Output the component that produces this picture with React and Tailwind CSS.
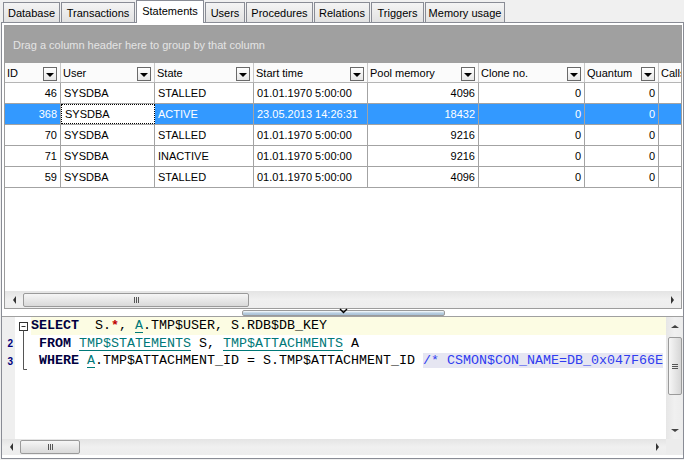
// Session monitor - Statements tab with grid and SQL preview
const tabs = [
  { label: 'Database', w: 'w-[57px]' },
  { label: 'Transactions', w: 'w-[74px]' },
  { label: 'Statements', w: 'w-[68px]', active: true },
  { label: 'Users', w: 'w-[40px]' },
  { label: 'Procedures', w: 'w-[67px]' },
  { label: 'Relations', w: 'w-[56px]' },
  { label: 'Triggers', w: 'w-[53px]' },
  { label: 'Memory usage', w: 'w-[80px]' },
];

const columns = [
  { key: 'id', label: 'ID', w: 'w-[56px]', right: true },
  { key: 'user', label: 'User', w: 'w-[94px]' },
  { key: 'state', label: 'State', w: 'w-[99px]' },
  { key: 'start', label: 'Start time', w: 'w-[114px]' },
  { key: 'pool', label: 'Pool memory', w: 'w-[111px]', right: true },
  { key: 'clone', label: 'Clone no.', w: 'w-[106px]', right: true },
  { key: 'quantum', label: 'Quantum', w: 'w-[74px]', right: true },
  { key: 'calls', label: 'Calls', w: 'w-[60px]', right: true },
];

const rows = [
  { id: 46, user: 'SYSDBA', state: 'STALLED', start: '01.01.1970 5:00:00', pool: 4096, clone: 0, quantum: 0, calls: '' },
  { id: 368, user: 'SYSDBA', state: 'ACTIVE', start: '23.05.2013 14:26:31', pool: 18432, clone: 0, quantum: 0, calls: '', selected: true },
  { id: 70, user: 'SYSDBA', state: 'STALLED', start: '01.01.1970 5:00:00', pool: 9216, clone: 0, quantum: 0, calls: '' },
  { id: 71, user: 'SYSDBA', state: 'INACTIVE', start: '01.01.1970 5:00:00', pool: 9216, clone: 0, quantum: 0, calls: '' },
  { id: 59, user: 'SYSDBA', state: 'STALLED', start: '01.01.1970 5:00:00', pool: 4096, clone: 0, quantum: 0, calls: '' },
];

function DropButton() {
  return (
    <div className="w-[14px] h-[14px] shrink-0 border border-[#6a6a6a] bg-gradient-to-b from-[#ffffff] to-[#e6e6e6] flex items-center justify-center">
      <div className="mt-[2px] border-x-[4px] border-x-transparent border-t-[4px] border-t-black" />
    </div>
  );
}

function Thumb({ className }) {
  return (
    <div className={`rounded-[2px] border border-[#9a9a9a] bg-gradient-to-b from-[#f6f6f6] to-[#d9d9d9] flex items-center justify-center ${className}`}>
      <div className="flex gap-[1px]">
        <div className="w-[1px] h-[6px] bg-[#555]" />
        <div className="w-[1px] h-[6px] bg-[#555]" />
        <div className="w-[1px] h-[6px] bg-[#555]" />
      </div>
    </div>
  );
}

function HScroll({ thumb, className = '' }) {
  return (
    <div className={`flex items-center bg-gradient-to-b from-[#e4e4e4] via-[#f0f0f0] to-[#ededed] ${className}`}>
      <div className="w-[18px] h-full flex items-center justify-center">
        <div className="border-y-[4px] border-y-transparent border-r-[3px] border-r-[#333]" />
      </div>
      <Thumb className={`${thumb} h-[14px]`} />
      <div className="flex-1" />
      <div className="w-[18px] h-full flex items-center justify-center">
        <div className="border-y-[4px] border-y-transparent border-l-[3px] border-l-[#333]" />
      </div>
    </div>
  );
}

function Grid() {
  return (
    <div className="ml-[2px] w-[678px] h-[284px] border border-[#9c9c9c] flex flex-col overflow-hidden">
      {/* Group by panel */}
      <div className="h-[37px] shrink-0 bg-[#a0a0a0] flex items-center pl-[8px] pt-[2px] text-[#e4e4e4]">
        Drag a column header here to group by that column
      </div>

      {/* Header */}
      <div className="h-[20px] shrink-0 flex bg-[#fbfbfb] border-b border-[#b5b5b5]">
        {columns.map((c) => (
          <div key={c.key} className={`${c.w} shrink-0 h-full flex items-center justify-between pl-[2px] pr-[3px] pt-[2px] border-r border-[#c8c8c8]`}>
            <span className="whitespace-nowrap">{c.label}</span>
            {c.key !== 'calls' && <DropButton />}
          </div>
        ))}
      </div>

      {/* Rows */}
      <div className="flex-1 bg-white">
        {rows.map((r) => (
          <div key={r.id} className={`h-[21px] flex border-b border-[#a3a3a3] ${r.selected ? 'bg-[#3399ff] text-white' : 'text-black'}`}>
            {columns.map((c) => {
              const focus = r.selected && c.key === 'user';
              return (
                <div
                  key={c.key}
                  className={`${c.w} shrink-0 h-full flex items-center px-[3px] pt-[1px] whitespace-nowrap ${c.right ? 'justify-end' : ''} ${
                    focus ? 'bg-white text-black border border-dotted border-black' : 'border-r border-[#a3a3a3]'
                  }`}
                >
                  {r[c.key]}
                </div>
              );
            })}
          </div>
        ))}
      </div>

      <HScroll thumb="w-[226px]" className="h-[17px] shrink-0" />
    </div>
  );
}

function Splitter() {
  return (
    <div className="h-[7px] shrink-0 flex justify-center items-center bg-white">
      <div className="ml-[2px] w-[203px] h-[6px] rounded-[2px] border border-[#9a9a9a] bg-gradient-to-b from-[#ffffff] via-[#b9cfe0] to-[#a8c0d6] relative flex justify-center">
        <svg className="absolute -top-[3px]" width="9" height="6" viewBox="0 0 9 6">
          <path d="M1 1 L4.5 4.5 L8 1" fill="none" stroke="#000" strokeWidth="1.4" />
        </svg>
      </div>
    </div>
  );
}

const kw = 'font-bold text-[#000040]';
const tbl = 'text-[#007878] underline decoration-[#007878] underline-offset-[3px]';

function Editor() {
  return (
    <div className="h-[139px] shrink-0 border-t border-[#a0a0a0] flex flex-col">
      <div className="h-[122px] flex">
        {/* gutter */}
        <div className="w-[13px] bg-[#efefef] flex flex-col items-end pr-[2px] text-[10px] font-bold text-[#00007a]">
          <div className="h-[17.7px]" />
          <div className="h-[17.7px] flex items-center">2</div>
          <div className="h-[17.7px] flex items-center">3</div>
        </div>
        {/* fold column */}
        <div className="w-[16px] bg-white">
          <svg width="16" height="60" viewBox="0 0 16 60">
            <rect x="4.5" y="5.5" width="8" height="8" fill="white" stroke="#333" />
            <line x1="6.5" y1="9.5" x2="10.5" y2="9.5" stroke="#333" />
            <line x1="8.5" y1="13.5" x2="8.5" y2="52.5" stroke="#555" />
            <line x1="8.5" y1="52.5" x2="12" y2="52.5" stroke="#555" />
          </svg>
        </div>
        {/* code */}
        <div className="flex-1 bg-white overflow-hidden font-['Liberation_Mono','Courier_New',monospace] text-[13.33px] text-black whitespace-pre">
          <div className="h-[17.7px] leading-[17.7px] bg-[#fcfce3]">
            <span className={kw}>SELECT</span>{'  S.'}<span className="font-bold text-[#c00000]">*</span>{', '}
            <span className={tbl}>A</span>{'.TMP$USER, S.RDB$DB_KEY'}
          </div>
          <div className="h-[17.7px] leading-[17.7px]">
            {' '}<span className={kw}>FROM</span>{' '}<span className={tbl}>TMP$STATEMENTS</span>{' S, '}
            <span className={tbl}>TMP$ATTACHMENTS</span>{' A'}
          </div>
          <div className="h-[17.7px] leading-[17.7px]">
            {' '}<span className={kw}>WHERE</span>{' '}<span className={tbl}>A</span>{'.TMP$ATTACHMENT_ID = S.TMP$ATTACHMENT_ID '}
            <span className="bg-[#e6e6f2] text-[#2f3cf0]">/* CSMON$CON_NAME=DB_0x047F66E</span>
          </div>
        </div>
        {/* vertical scrollbar */}
        <div className="w-[17px] bg-gradient-to-r from-[#e6e6e6] via-[#f0f0f0] to-[#ececec] flex flex-col items-center">
          <div className="h-[18px] w-full flex items-center justify-center">
            <div className="border-x-[4px] border-x-transparent border-b-[3px] border-b-[#444]" />
          </div>
          <div className="h-[2px]" />
          <div className="w-[14px] h-[58px] rounded-[2px] border border-[#9a9a9a] bg-gradient-to-r from-[#f6f6f6] to-[#d6d6d6] flex flex-col items-center justify-center gap-[1px]">
            <div className="w-[6px] h-[1px] bg-[#555]" />
            <div className="w-[6px] h-[1px] bg-[#555]" />
            <div className="w-[6px] h-[1px] bg-[#555]" />
          </div>
          <div className="flex-1" />
          <div className="h-[18px] w-full flex items-center justify-center">
            <div className="border-x-[4px] border-x-transparent border-t-[3px] border-t-[#444]" />
          </div>
        </div>
      </div>
      <div className="h-[16px] flex">
        <HScroll thumb="w-[60px]" className="flex-1 h-full" />
        <div className="w-[17px] bg-[#ececec]" />
      </div>
    </div>
  );
}

export default function App() {
  return (
    <div className="w-[684px] h-[460px] bg-[#f0f0f0] font-['Liberation_Sans',Arial,sans-serif] text-[11px] text-black overflow-hidden">
      {/* Tabs */}
      <div className="h-[22px] flex items-end gap-[1px] pl-[3px]">
        {tabs.map((t) =>
          t.active ? (
            <div key={t.label} className={`${t.w} h-[23px] -mb-[1px] relative z-10 bg-white border border-b-0 border-[#898c95] flex items-center justify-center pb-[1px]`}>
              {t.label}
            </div>
          ) : (
            <div key={t.label} className={`${t.w} h-[20px] bg-gradient-to-b from-[#f4f4f4] to-[#e2e2e2] border border-b-0 border-[#898c95] flex items-center justify-center pt-[1px]`}>
              {t.label}
            </div>
          )
        )}
      </div>

      {/* Tab sheet */}
      <div className="ml-[1px] w-[683px] h-[437px] border border-[#898c95] bg-white flex flex-col pt-[2px]">
        <Grid />
        <Splitter />
        <Editor />
      </div>
    </div>
  );
}
